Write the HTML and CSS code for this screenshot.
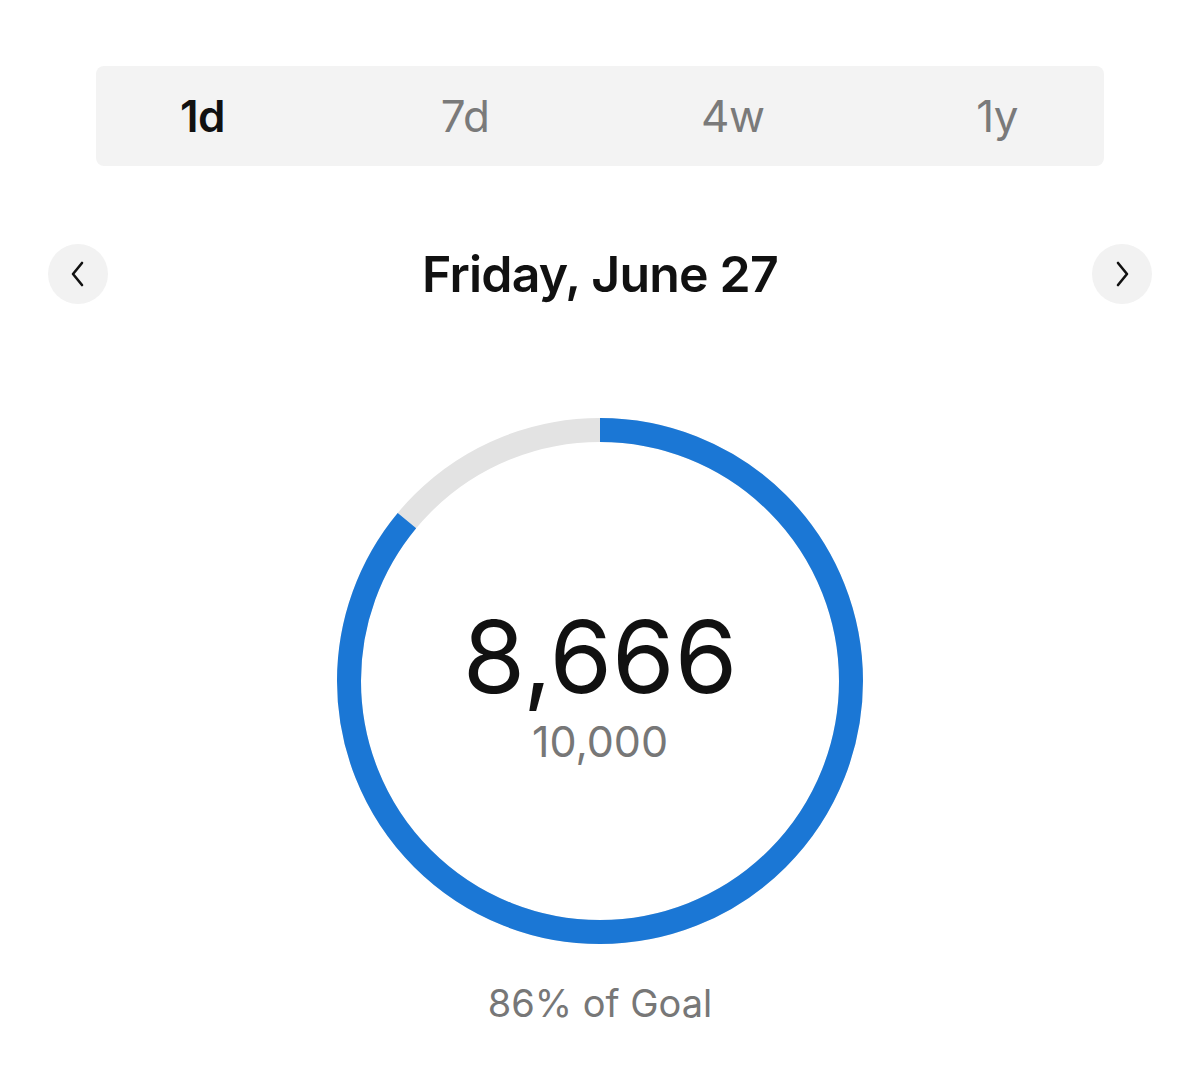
FILE: index.html
```html
<!DOCTYPE html>
<html>
<head>
<meta charset="utf-8">
<link rel="stylesheet" href="styles.css">
</head>
<body>
<div class="page">
  <div class="segments">
    <span class="seg active">1d</span>
    <span class="seg">7d</span>
    <span class="seg">4w</span>
    <span class="seg">1y</span>
  </div>
  <div class="nav">
    <button class="navbtn" aria-label="Previous">
      <svg width="24" height="30" viewBox="0 0 24 30"><path d="M16 4 L7 15 L16 26" fill="none" stroke="#111" stroke-width="2.6" stroke-linecap="round" stroke-linejoin="round"/></svg>
    </button>
    <div class="date">Friday, June 27</div>
    <button class="navbtn" aria-label="Next">
      <svg width="24" height="30" viewBox="0 0 24 30"><path d="M8 4 L17 15 L8 26" fill="none" stroke="#111" stroke-width="2.6" stroke-linecap="round" stroke-linejoin="round"/></svg>
    </button>
  </div>
  <div class="ring">
    <svg class="ringsvg" width="526" height="526" viewBox="0 0 526 526">
      <circle cx="263" cy="263" r="251" fill="none" stroke="#e3e3e3" stroke-width="24"/>
      <circle cx="263" cy="263" r="251" fill="none" stroke="#1b77d5" stroke-width="24" stroke-dasharray="1356.3 1577.1" transform="rotate(-90 263 263)"/>
    </svg>
    <div class="values">
      <div class="steps">8,666</div>
      <div class="goal">10,000</div>
    </div>
  </div>
  <div class="pct">86% of Goal</div>
</div>
</body>
</html>
```

FILE: styles.css
```css
* { box-sizing: border-box; }
html, body { margin: 0; padding: 0; background: #fff; }
body { font-family: Inter, "Open Sans", "Liberation Sans", sans-serif; color: #111; }
.page { width: 1200px; display: flex; flex-direction: column; align-items: center; }
.segments {
  margin-top: 66px;
  width: 1008px;
  height: 100px;
  background: #f3f3f3;
  border-radius: 8px;
  display: flex;
  align-items: center;
  justify-content: space-between;
  padding: 0 86px 0 84px;
}
.seg { font-size: 44px; color: #7a7a7a; font-weight: 400; letter-spacing: -0.5px; }
.seg:nth-child(2) { margin-left: 4px; }
.seg.active { color: #111; font-weight: 600; }
.nav {
  margin-top: 78px;
  width: 1200px;
  padding: 0 48px;
  height: 60px;
  display: flex;
  align-items: center;
  justify-content: space-between;
}
.navbtn {
  width: 60px; height: 60px; border-radius: 50%;
  border: none; background: #f2f2f2; padding: 0;
  display: flex; align-items: center; justify-content: center;
}
.date { font-size: 50px; font-weight: 600; letter-spacing: -0.8px; color: #111; }
.ring { margin-top: 114px; display: grid; width: 526px; height: 526px; }
.ringsvg { grid-area: 1 / 1; }
.values { grid-area: 1 / 1; display: flex; flex-direction: column; align-items: center; padding-top: 178px; }
.steps { font-size: 101px; font-weight: 400; line-height: 120px; color: #111; letter-spacing: 0; }
.goal { font-size: 43px; line-height: 56px; color: #777; margin-top: -3px; }
.pct { margin-top: 35px; font-size: 38px; line-height: 48px; color: #777; }
```
